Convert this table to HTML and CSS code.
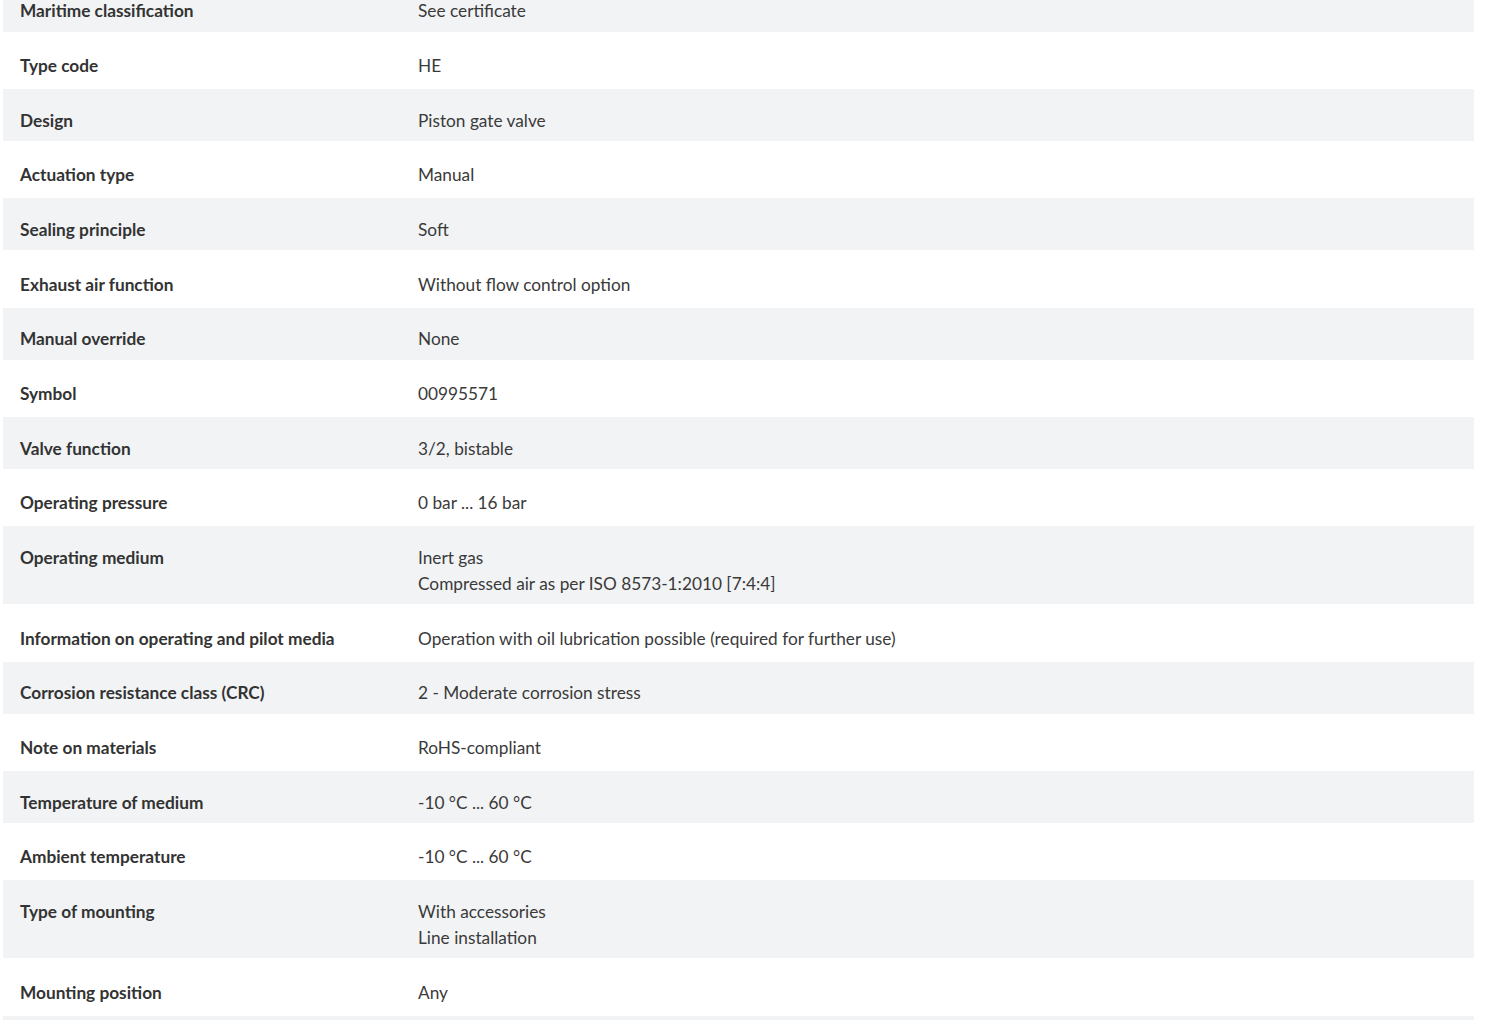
FILE: index.html
```html
<!DOCTYPE html>
<html lang="en">
<head>
<meta charset="utf-8">
<title>Technical data</title>
<link rel="stylesheet" href="styles.css">
</head>
<body>
<div class="page">
  <dl class="specs">
    <div class="row"><dt>Maritime classification</dt><dd>See certificate</dd></div>
    <div class="row"><dt>Type code</dt><dd>HE</dd></div>
    <div class="row"><dt>Design</dt><dd>Piston gate valve</dd></div>
    <div class="row"><dt>Actuation type</dt><dd>Manual</dd></div>
    <div class="row"><dt>Sealing principle</dt><dd>Soft</dd></div>
    <div class="row"><dt>Exhaust air function</dt><dd>Without flow control option</dd></div>
    <div class="row"><dt>Manual override</dt><dd>None</dd></div>
    <div class="row"><dt>Symbol</dt><dd>00995571</dd></div>
    <div class="row"><dt>Valve function</dt><dd>3/2, bistable</dd></div>
    <div class="row"><dt>Operating pressure</dt><dd>0 bar ... 16 bar</dd></div>
    <div class="row"><dt>Operating medium</dt><dd>Inert gas<br>Compressed air as per ISO 8573-1:2010 [7:4:4]</dd></div>
    <div class="row"><dt>Information on operating and pilot media</dt><dd>Operation with oil lubrication possible (required for further use)</dd></div>
    <div class="row"><dt>Corrosion resistance class (CRC)</dt><dd>2 - Moderate corrosion stress</dd></div>
    <div class="row"><dt>Note on materials</dt><dd>RoHS-compliant</dd></div>
    <div class="row"><dt>Temperature of medium</dt><dd>-10 °C ... 60 °C</dd></div>
    <div class="row"><dt>Ambient temperature</dt><dd>-10 °C ... 60 °C</dd></div>
    <div class="row"><dt>Type of mounting</dt><dd>With accessories<br>Line installation</dd></div>
    <div class="row"><dt>Mounting position</dt><dd>Any</dd></div>
    <div class="row"><dt>&nbsp;</dt><dd>&nbsp;</dd></div>
  </dl>
</div>
</body>
</html>
```

FILE: styles.css
```css
html, body {
  margin: 0;
  padding: 0;
  background: #ffffff;
}

body {
  font-family: Lato, "Open Sans", "Liberation Sans", sans-serif;
  font-size: 17.25px;
  color: #333333;
  overflow: hidden;
}

.page {
  width: 1471px;
  padding-left: 3px;
}

.specs {
  display: flex;
  flex-direction: column;
  gap: 2.7px;
  margin: -20.4px 0 0 0;
  padding: 0;
}

.row {
  display: grid;
  grid-template-columns: 398px 1fr;
  line-height: 26px;
}

.row:nth-child(odd) {
  background: #f2f3f5;
}

.row dt,
.row dd {
  margin: 0;
  padding: 18.8px 17px 7.2px 17px;
}

.row dt {
  font-weight: 700;
  color: #333333;
}

.row dd {
  color: #3a3a3a;
}
```
